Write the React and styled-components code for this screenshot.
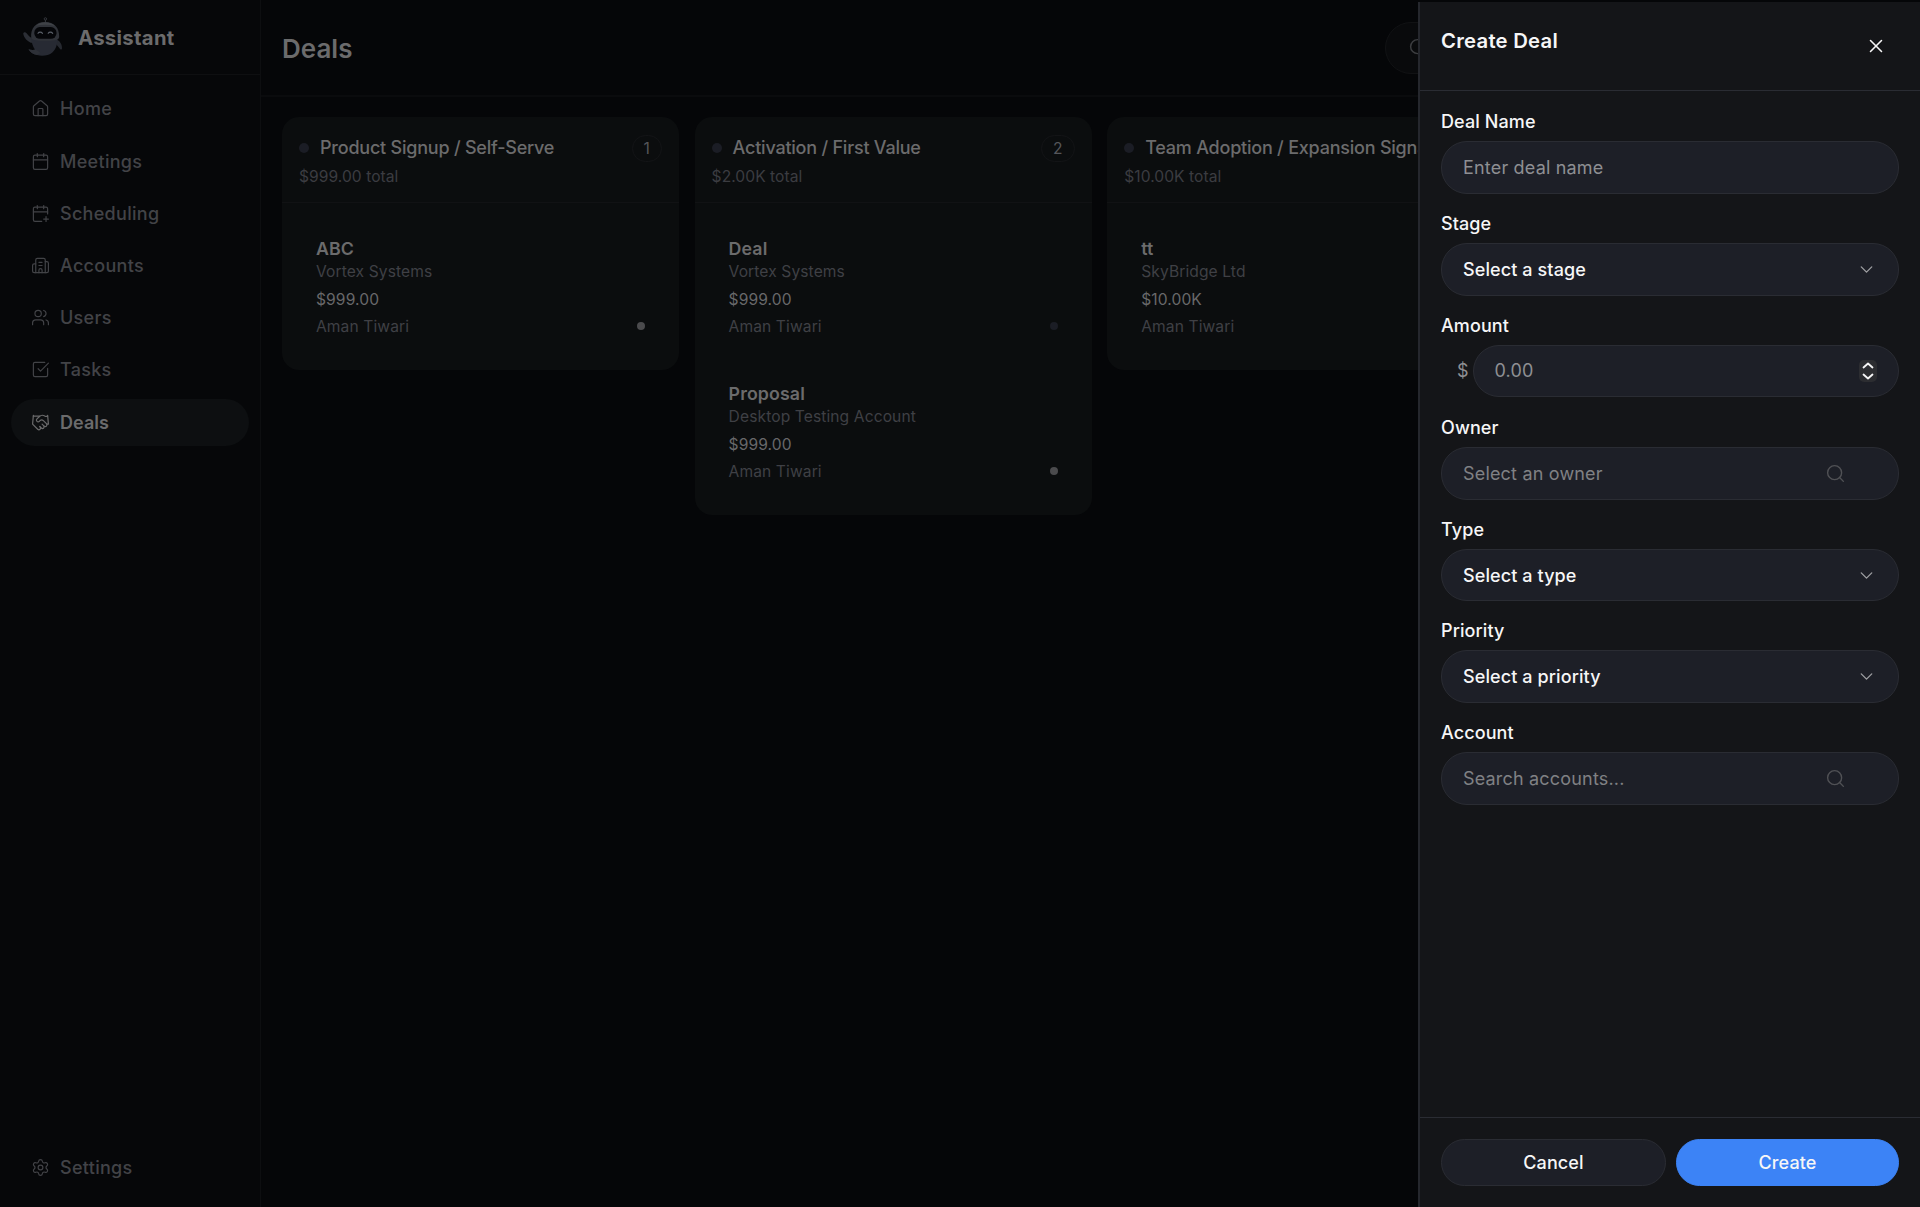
import React from 'react'
import styled, { createGlobalStyle } from 'styled-components'
import {
    House,
    Calendar,
    CalendarPlus,
    Building2,
    Users,
    SquareCheckBig,
    Handshake,
    Settings,
    Search,
    ChevronDown,
    X,
} from 'lucide-react'

const GlobalStyle = createGlobalStyle`
    * {
        box-sizing: border-box;
    }

    body {
        margin: 0;
        background: #050608;
        font-family: Inter, "Liberation Sans", sans-serif;
        letter-spacing: .1px;
        overflow: hidden;
    }

    button, input {
        font-family: inherit;
        letter-spacing: inherit;
    }
`

const Page = styled.div`
    display: flex;
    width: 1920px;
    height: 1207px;
    overflow: hidden;
    background: #050608;
`

/* sidebar */

const Sidebar = styled.aside`
    display: flex;
    flex-direction: column;
    flex: none;
    width: 261px;
    background: #060709;
    border-right: 1px solid #0d0e10;
`

const Brand = styled.div`
    display: flex;
    align-items: center;
    gap: 16px;
    height: 75px;
    padding: 0 0 0 22px;
    border-bottom: 1px solid #0e0f11;
`

const BrandName = styled.span`
    padding-top: 2px;
    color: #6b6b6c;
    font-size: 20.3px;
    font-weight: 700;
    line-height: 28px;
    letter-spacing: .3px;
`

const Nav = styled.nav`
    display: flex;
    flex-direction: column;
    gap: 5.2px;
    padding: 10.4px 11px;
`

const BottomNav = styled(Nav)`
    margin-top: auto;
    padding-bottom: 16px;
`

const NavItem = styled.a`
    display: flex;
    align-items: center;
    gap: 10px;
    height: 47px;
    padding-left: 20px;
    border-radius: 24px;
    background: ${props => props.$active ? '#0d0f11' : 'transparent'};
    color: ${props => props.$active ? '#6b6b6c' : '#424347'};
    font-size: 18px;
    font-weight: ${props => props.$active ? 600 : 500};
    letter-spacing: ${props => props.$active ? '.05px' : '.3px'};
`

/* board */

const Main = styled.main`
    flex: 1;
    min-width: 0;
`

const Header = styled.header`
    display: flex;
    align-items: center;
    justify-content: space-between;
    height: 97px;
    padding: 0 22px 0 21px;
    border-bottom: 2px solid #0a0b0d;
`

const Title = styled.h1`
    margin: 0;
    padding-top: 2px;
    color: #6b6b6c;
    font-size: 26px;
    font-weight: 600;
    line-height: 34px;
    letter-spacing: 0;
`

const SearchBox = styled.div`
    display: flex;
    align-items: center;
    width: 513px;
    height: 52px;
    padding-left: 22px;
    border: 1px solid #111214;
    border-radius: 26px;
    background: #090a0c;
    color: #3c3d40;
`

const Board = styled.div`
    display: flex;
    align-items: flex-start;
    gap: 15.6px;
    padding: 20px 21px;
`

const Column = styled.section`
    flex: none;
    width: 397px;
    padding-bottom: 16px;
    border-radius: 17px;
    background: #0b0d0e;
`

const ColumnHeader = styled.div`
    height: 86px;
    padding: 17px;
    border-bottom: 1px solid #111214;
`

const ColumnTitleRow = styled.div`
    display: flex;
    align-items: center;
    height: 28px;
`

const StageDot = styled.span`
    flex: none;
    width: 10px;
    height: 10px;
    margin-right: 11px;
    border-radius: 50%;
    background: #1b1d25;
`

const ColumnTitle = styled.h2`
    flex: 1;
    margin: 0;
    color: #6b6b6c;
    font-size: 18px;
    font-weight: 500;
    line-height: 26px;
    letter-spacing: -.22px;
    white-space: nowrap;
`

const Count = styled.span`
    display: flex;
    align-items: center;
    justify-content: center;
    height: 27px;
    padding: 0 11px;
    border: 1px solid #131416;
    border-radius: 14px;
    color: #55565a;
    font-size: 15.6px;
`

const Total = styled.div`
    padding-top: 1px;
    color: #3b3c41;
    font-size: 15.6px;
    line-height: 27px;
    letter-spacing: .05px;
`

const Deals = styled.div`
    display: flex;
    flex-direction: column;
    gap: 11px;
    padding: 17px 17px 0;
`

const Deal = styled.article`
    height: 134px;
    padding: 17px;
    color: #3f4045;
    font-size: 15.6px;
    line-height: 21px;
`

const DealName = styled.div`
    color: #6b6b6c;
    font-size: 17.8px;
    font-weight: 600;
    line-height: 24px;
`

const DealAmount = styled.div`
    margin: 7px 0 5.5px;
    color: #68686a;
`

const DealOwner = styled.div`
    display: flex;
    align-items: center;
    justify-content: space-between;
`

const PriorityDot = styled.span`
    width: 8px;
    height: 8px;
    border-radius: 50%;
    background: ${props => props.$muted ? '#1b1d25' : '#4b4b4d'};
`

/* drawer */

const Drawer = styled.aside`
    position: fixed;
    top: 2px;
    right: 0;
    bottom: 0;
    display: flex;
    flex-direction: column;
    width: 502px;
    border-left: 2px solid #25272d;
    background: #141518;
    color: #f6f6f7;
`

const DrawerHeader = styled.header`
    display: flex;
    align-items: flex-start;
    justify-content: space-between;
    height: 89px;
    padding: 25px 33px 0 21px;
    border-bottom: 1px solid #2a2c33;
`

const DrawerTitle = styled.h2`
    margin: 0;
    font-size: 20.3px;
    font-weight: 600;
    line-height: 28px;
    letter-spacing: .25px;
`

const CloseButton = styled.button`
    display: flex;
    margin-top: 8px;
    padding: 0;
    border: 0;
    background: none;
    color: #f6f6f7;
`

const Form = styled.form`
    display: flex;
    flex: 1;
    flex-direction: column;
    gap: 16px;
    padding: 17px 21px;
`

const Field = styled.div`
    display: flex;
    flex-direction: column;
    height: 85.9px;
`

const Label = styled.label`
    height: 33px;
    font-size: 18px;
    font-weight: 500;
    line-height: 27px;
`

const Control = styled.div`
    display: flex;
    align-items: center;
    flex: 1;
    min-width: 0;
    height: 52px;
    padding: 0 ${props => props.$end || 21}px 0 21px;
    border: 1px solid #2a2c33;
    border-radius: 26px;
    background: #1d1f27;
    color: #6c6d70;
`

const Input = styled.input`
    flex: 1;
    min-width: 0;
    padding: 0;
    border: 0;
    outline: 0;
    background: none;
    color: #f6f6f7;
    font-size: 18px;
    letter-spacing: .18px;

    &::placeholder {
        color: ${props => props.$faint ? '#808184' : '#8e8f93'};
        opacity: 1;
    }
`

const SelectValue = styled.span`
    flex: 1;
    color: #f6f6f7;
    font-size: 18px;
    font-weight: 500;
`

const AmountRow = styled.div`
    display: flex;
    align-items: center;
`

const Currency = styled.span`
    width: 31.5px;
    padding-left: 16px;
    color: #8e8f93;
    font-size: 18px;
`

const Stepper = styled.span`
    display: flex;
    align-items: center;
    justify-content: center;
    width: 18px;
    height: 22px;
    border-radius: 5px;
    background: #2c2d31;
    color: #f6f6f7;
`

const Footer = styled.footer`
    display: grid;
    grid-template-columns: 225px 223px;
    gap: 10px;
    height: 90px;
    padding: 21px;
    border-top: 1px solid #2a2c33;
`

const Button = styled.button`
    height: 47px;
    padding: 0;
    border: 1px solid ${props => props.$primary ? '#3c83f6' : '#2a2c33'};
    border-radius: 24px;
    background: ${props => props.$primary ? '#3c83f6' : '#1d1f27'};
    color: #f6f6f7;
    font-size: 18px;
    font-weight: 500;
`

const nav_items = [
    { label: 'Home', icon: House },
    { label: 'Meetings', icon: Calendar },
    { label: 'Scheduling', icon: CalendarPlus },
    { label: 'Accounts', icon: Building2 },
    { label: 'Users', icon: Users },
    { label: 'Tasks', icon: SquareCheckBig },
    { label: 'Deals', icon: Handshake, active: true },
]

const columns = [
    {
        title: 'Product Signup / Self-Serve',
        total: '$999.00 total',
        deals: [
            { name: 'ABC', account: 'Vortex Systems', amount: '$999.00', owner: 'Aman Tiwari' },
        ],
    },
    {
        title: 'Activation / First Value',
        total: '$2.00K total',
        deals: [
            { name: 'Deal', account: 'Vortex Systems', amount: '$999.00', owner: 'Aman Tiwari', muted: true },
            { name: 'Proposal', account: 'Desktop Testing Account', amount: '$999.00', owner: 'Aman Tiwari' },
        ],
    },
    {
        title: 'Team Adoption / Expansion Signals',
        total: '$10.00K total',
        deals: [
            { name: 'tt', account: 'SkyBridge Ltd', amount: '$10.00K', owner: 'Aman Tiwari' },
        ],
    },
]

const RobotLogo = () => (
    <svg width="40" height="40" viewBox="0 0 40 40" fill="none">
        <circle cx="23.4" cy="1.9" r="1.2" stroke="#34373d" />
        <path d="M23.4 3v3" stroke="#34373d" />
        <path d="M1.2 16.5c.6-1.6 2.3-1.5 3.4-.2 1.6 1.9 3.4 4.2 6 5.2l-.8 4.5C5.5 24.8 1.8 20.8 1.2 16.5z" fill="#2b2e35" />
        <path d="M34.5 22.5c3 1 5.5 4.6 5.5 8.4 0 2.2-1.7 2.1-2.5.4l-3.5-4.3z" fill="#262930" />
        <path d="M9.5 20.5h25.5c.8 6-.7 11.5-4.7 15-3.6 3-9.8 4.1-15.3 2.6-3.6-1-7-3-8.5-5.9 2.3.9 4.3.9 6.5.6-2.3-3.3-3.8-7.800-3.500-12.300z" fill="#272a33" />
        <path d="M6.5 32.2c2.4 1 5 .8 7.5.3l4.5 3.5-3.5 2.1c-3.8-.9-7.1-3-8.5-5.9z" fill="#2d3037" />
        <path d="M9.2 20.5C8.3 11.2 14 5 23 5s14.5 5.5 14.2 15c-.3 2.3-2.7 3.2-4.5 3.2-6 .7-13 .8-19 0-2-.2-4.3-.6-4.5-2.7z" fill="#303339" />
        <path d="M14 8.7C19 4.2 28 4.2 33 8.9c-6-1.5-13-1.5-19-.2z" fill="#3f4247" />
        <rect x="12.3" y="10" width="22.2" height="11.8" rx="5.6" fill="#050609" />
        <path d="M16 16.3c1-1.6 3.3-1.6 4.5 0M26.2 16.3c1-1.6 3.3-1.6 4.5 0" stroke="#5b6069" strokeWidth="1.1" strokeLinecap="round" />
    </svg>
)

const StepperArrows = () => (
    <svg width="12" height="20" viewBox="0 0 12 20" fill="none" stroke="currentColor" strokeWidth="1.8" strokeLinecap="round" strokeLinejoin="round">
        <path d="M1.5 6.5 6 2.5l4.5 4" />
        <path d="M1.5 13.5 6 17.5l4.5-4" />
    </svg>
)

const NavLink = ({ label, icon: Icon, active }) => (
    <NavItem $active={active}>
        <Icon size={19} strokeWidth={1.5} />
        {label}
    </NavItem>
)

const DealColumn = ({ title, total, deals }) => (
    <Column>
        <ColumnHeader>
            <ColumnTitleRow>
                <StageDot />
                <ColumnTitle>{title}</ColumnTitle>
                <Count>{deals.length}</Count>
            </ColumnTitleRow>
            <Total>{total}</Total>
        </ColumnHeader>
        <Deals>
            {deals.map(deal => (
                <Deal key={deal.name}>
                    <DealName>{deal.name}</DealName>
                    <div>{deal.account}</div>
                    <DealAmount>{deal.amount}</DealAmount>
                    <DealOwner>
                        {deal.owner}
                        <PriorityDot $muted={deal.muted} />
                    </DealOwner>
                </Deal>
            ))}
        </Deals>
    </Column>
)

const SelectField = ({ label, value }) => (
    <Field>
        <Label>{label}</Label>
        <Control>
            <SelectValue>{value}</SelectValue>
            <ChevronDown size={21} strokeWidth={1.5} color="#a0a1a4" />
        </Control>
    </Field>
)

const LookupField = ({ label, placeholder }) => (
    <Field>
        <Label>{label}</Label>
        <Control $end={52}>
            <Input placeholder={placeholder} $faint />
            <Search size={21} strokeWidth={1.6} color="#505155" />
        </Control>
    </Field>
)

const CreateDeal = () => (
    <Drawer>
        <DrawerHeader>
            <DrawerTitle>Create Deal</DrawerTitle>
            <CloseButton type="button" aria-label="Close">
                <X size={22} strokeWidth={1.7} />
            </CloseButton>
        </DrawerHeader>
        <Form>
            <Field>
                <Label>Deal Name</Label>
                <Control>
                    <Input placeholder="Enter deal name" />
                </Control>
            </Field>
            <SelectField label="Stage" value="Select a stage" />
            <Field>
                <Label>Amount</Label>
                <AmountRow>
                    <Currency>$</Currency>
                    <Control>
                        <Input placeholder="0.00" />
                        <Stepper>
                            <StepperArrows />
                        </Stepper>
                    </Control>
                </AmountRow>
            </Field>
            <LookupField label="Owner" placeholder="Select an owner" />
            <SelectField label="Type" value="Select a type" />
            <SelectField label="Priority" value="Select a priority" />
            <LookupField label="Account" placeholder="Search accounts..." />
        </Form>
        <Footer>
            <Button type="button">Cancel</Button>
            <Button type="button" $primary>Create</Button>
        </Footer>
    </Drawer>
)

const App = () => (
    <>
        <GlobalStyle />
        <Page>
            <Sidebar>
                <Brand>
                    <RobotLogo />
                    <BrandName>Assistant</BrandName>
                </Brand>
                <Nav>
                    {nav_items.map(item => <NavLink key={item.label} {...item} />)}
                </Nav>
                <BottomNav>
                    <NavLink label="Settings" icon={Settings} />
                </BottomNav>
            </Sidebar>
            <Main>
                <Header>
                    <Title>Deals</Title>
                    <SearchBox>
                        <Search size={21} strokeWidth={1.7} />
                    </SearchBox>
                </Header>
                <Board>
                    {columns.map(column => <DealColumn key={column.title} {...column} />)}
                </Board>
            </Main>
        </Page>
        <CreateDeal />
    </>
)

export default App
